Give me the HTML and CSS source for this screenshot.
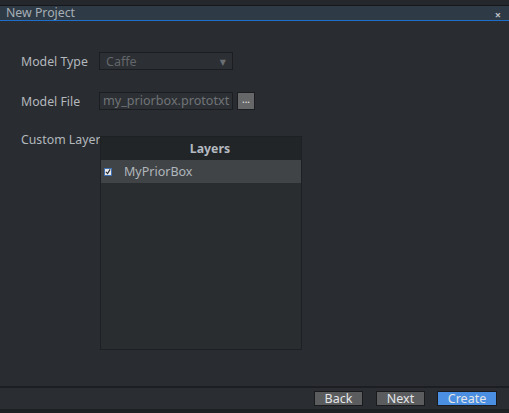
FILE: index.html
```html
<!DOCTYPE html>
<html>
<head>
<meta charset="utf-8">
<link rel="stylesheet" href="styles.css">
</head>
<body>
<div class="window">
  <div class="topstrip"></div>
  <div class="titlebar">
    <span class="title">New Project</span>
    <span class="close">×</span>
  </div>
  <div class="content">
    <div class="row">
      <span class="label">Model Type</span>
      <div class="select"><span>Caffe</span><span class="arrow">▼</span></div>
    </div>
    <div class="row">
      <span class="label">Model File</span>
      <div class="input">my_priorbox.prototxt</div>
      <div class="browse">...</div>
    </div>
    <div class="row layers-row">
      <span class="label">Custom Layer</span>
      <div class="panel">
        <div class="panel-head">Layers</div>
        <div class="item">
          <span class="check"><svg width="7" height="7" viewBox="0 0 7 7"><path d="M1 4 L3 6 L6 1" stroke="#2a2d30" stroke-width="1.4" fill="none"/></svg></span>
          <span class="item-text">MyPriorBox</span>
        </div>
      </div>
    </div>
  </div>
  <div class="footer">
    <button class="btn">Back</button>
    <button class="btn">Next</button>
    <button class="btn primary">Create</button>
  </div>
  <div class="bottomstrip"></div>
</div>
</body>
</html>
```
FILE: styles.css
```css
* { box-sizing: border-box; }
html, body { margin: 0; padding: 0; }
body {
  width: 509px;
  height: 413px;
  background: #1f2225;
  font-family: "Noto Sans", "DejaVu Sans", sans-serif;
  font-size: 12px;
  overflow: hidden;
}
.window {
  display: flex;
  flex-direction: column;
  height: 413px;
}
.topstrip {
  height: 6px;
  background: #24272b;
  border-bottom: 1px solid #16181b;
}
.titlebar {
  height: 15px;
  background: #2e3a45;
  border-bottom: 1px solid #1f6fca;
  display: flex;
  align-items: center;
  justify-content: space-between;
  padding: 0 8px 0 6px;
}
.title {
  color: #a6aeb6;
  font-size: 12.3px;
  line-height: 14px;
}
.close {
  color: #b8bec4;
  font-size: 11px;
  font-weight: bold;
  line-height: 10px;
  margin-top: 3px;
}
.content {
  flex: 1;
  background: #292c30;
  padding: 31px 0 0 21px;
  display: flex;
  flex-direction: column;
}
.row {
  display: flex;
  align-items: center;
  height: 18px;
  margin-bottom: 22px;
}
.label {
  width: 78px;
  flex-shrink: 0;
  white-space: nowrap;
  color: #b3b8bd;
  font-size: 12.3px;
}
.select {
  width: 134px;
  height: 18px;
  border: 1px solid #1b1d20;
  background: #2c2f33;
  color: #62666a;
  display: flex;
  align-items: center;
  justify-content: space-between;
  padding: 0 6px 0 6px;
  font-size: 12.5px;
}
.arrow {
  font-size: 8px;
  color: #6b6f73;
}
.input {
  width: 134px;
  height: 18px;
  border: 1px solid #1b1d20;
  background: #2c2f33;
  color: #707478;
  font-size: 12.6px;
  line-height: 16px;
  padding: 0 3px;
  white-space: nowrap;
  overflow: hidden;
}
.browse {
  width: 18px;
  height: 18px;
  margin-left: 4px;
  border: 1px solid #1b1d20;
  background: #666768;
  color: #e8e8e8;
  font-size: 10px;
  line-height: 12px;
  text-align: center;
}
.layers-row {
  align-items: flex-start;
  height: auto;
}
.layers-row .label {
  width: 79px;
  margin-top: -1px;
}
.panel {
  width: 202px;
  height: 214px;
  border: 1px solid #1e2124;
  background: #2a2d30;
  margin-top: 4px;
}
.panel-head {
  height: 23px;
  background: #222528;
  color: #b4bac0;
  font-weight: bold;
  font-size: 12.3px;
  text-align: center;
  line-height: 23px;
  padding-left: 18px;
}
.item {
  height: 23px;
  background: #404447;
  display: flex;
  align-items: center;
  padding-left: 3px;
}
.check {
  width: 8px;
  height: 8px;
  background: #e8eaec;
  border: 1px solid #3f6fb0;
  display: flex;
  align-items: center;
  justify-content: center;
}
.item-text {
  margin-left: 12px;
  color: #b0b6bc;
  font-size: 12.5px;
}
.footer {
  height: 24px;
  background: #2a2d31;
  border-top: 2px solid #1c1e21;
  border-bottom: 1px solid #1c1e21;
  display: flex;
  align-items: center;
  justify-content: flex-end;
  padding-right: 12px;
  gap: 13px;
}
.btn {
  height: 15px;
  width: 49px;
  padding: 0;
  border: 1px solid #191a1c;
  background: #5b5c5e;
  color: #e4e6e8;
  font-family: "Noto Sans", "DejaVu Sans", sans-serif;
  font-size: 12.5px;
  line-height: 13px;
}
.btn.primary {
  width: 60px;
  background: #4a8fe2;
  margin-left: -1px;
}
.bottomstrip {
  height: 3px;
  background: #1f2225;
}
```
